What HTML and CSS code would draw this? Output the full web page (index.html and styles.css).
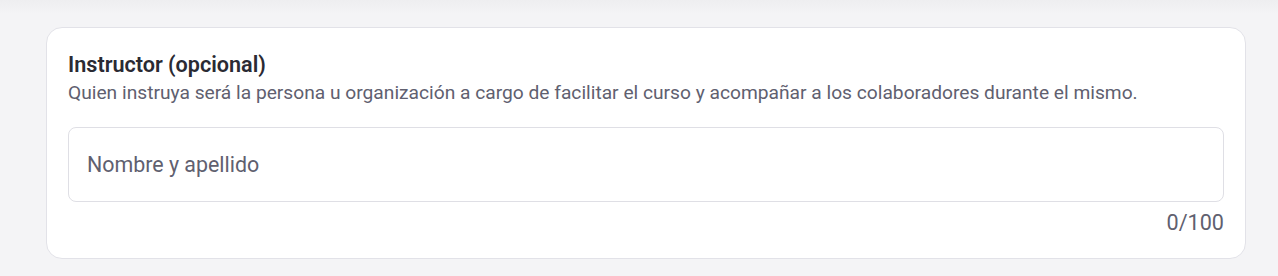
FILE: index.html
```html
<!DOCTYPE html>
<html lang="es">
<head>
<meta charset="utf-8">
<link rel="stylesheet" href="styles.css">
</head>
<body>
<div class="page">
  <section class="card">
    <h2 class="title">Instructor (opcional)</h2>
    <p class="desc">Quien instruya será la persona u organización a cargo de facilitar el curso y acompañar a los colaboradores durante el mismo.</p>
    <div class="field">
      <input class="input" type="text" placeholder="Nombre y apellido">
    </div>
    <div class="counter">0/100</div>
  </section>
</div>
</body>
</html>
```
FILE: styles.css
```css
html, body {
  margin: 0;
  padding: 0;
  font-family: Roboto, "Liberation Sans", sans-serif;
}
body {
  background: #f4f4f6;
}
.page {
  min-height: 276px;
  box-sizing: border-box;
  padding: 27px 32px 0 46px;
  background: linear-gradient(180deg, #eeeef0 0px, #f4f4f6 14px, #f4f4f6 100%);
}
.card {
  box-sizing: border-box;
  width: 1200px;
  height: 232px;
  background: #ffffff;
  border: 1px solid #e2e2e8;
  border-radius: 16px;
  padding: 22px 21px 0 21px;
}
.title {
  margin: 0;
  font-size: 21.6px;
  font-weight: 600;
  line-height: 30px;
  color: #2a2a33;
}
.desc {
  margin: 0;
  font-size: 19.2px;
  line-height: 26px;
  color: #60606f;
}
.field {
  margin-top: 21px;
}
.input {
  box-sizing: border-box;
  width: 100%;
  height: 75px;
  border: 1px solid #dfdfe5;
  border-radius: 8px;
  padding: 0 18px;
  font-family: inherit;
  font-size: 21.4px;
  color: #2a2a33;
  background: #fff;
  outline: none;
}
.input::placeholder {
  color: #60606f;
}
.counter {
  margin-top: 8px;
  text-align: right;
  font-size: 21.6px;
  line-height: 26px;
  color: #60606f;
}
```
